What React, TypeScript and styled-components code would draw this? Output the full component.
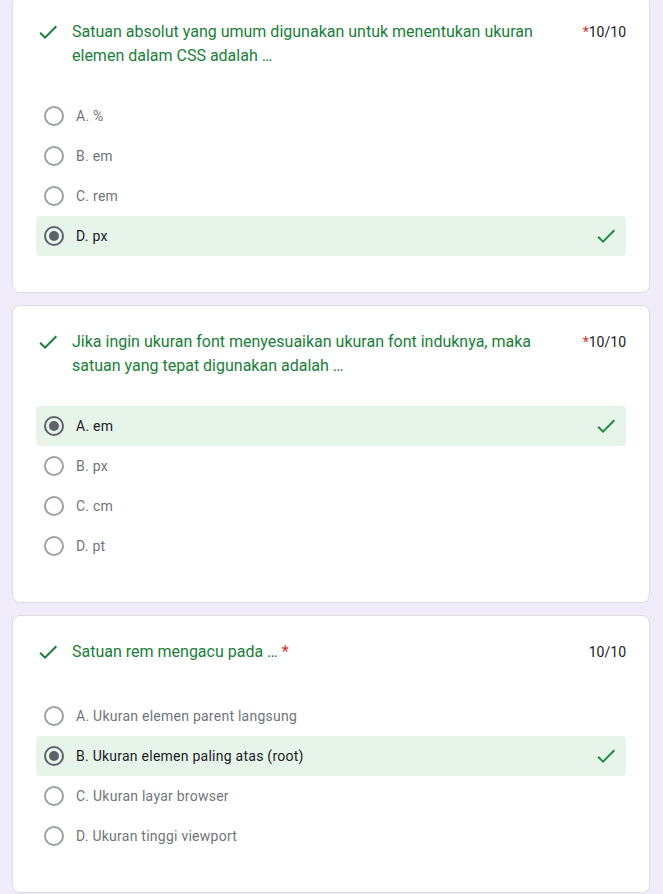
import React from "react";
import styled, { createGlobalStyle } from "styled-components";

const Global = createGlobalStyle`
  html, body { margin: 0; padding: 0; background: #f0ebf8; }
  body { font-family: Roboto, "Liberation Sans", Arial, sans-serif; overflow: hidden; }
`;

const Page = styled.div`
  display: flex;
  flex-direction: column;
  gap: 12px;
  padding: 0 13px 0 12px;
  margin-top: -5px;
`;

const Card = styled.div`
  background: #fff;
  border: 1px solid #dadce0;
  border-radius: 8px;
  padding: 24px 23px 36px;
`;

const Header = styled.div`
  display: flex;
  align-items: flex-start;
  min-height: 28px;
  margin-bottom: 28px;
`;

const HeadIcon = styled.svg`
  width: 24px;
  height: 24px;
  flex: none;
  margin-right: 12px;
  fill: #188038;
`;

const Title = styled.div`
  flex: 1;
  font-size: 16px;
  line-height: 24px;
  color: #188038;
  padding-right: 24px;
`;

const Req = styled.span`
  color: #d93025;
`;

const Score = styled.div`
  flex: none;
  font-size: 14px;
  line-height: 24px;
  color: #202124;
`;

const Options = styled.div`
  display: flex;
  flex-direction: column;
`;

const Row = styled.div<{ $selected: boolean }>`
  display: flex;
  align-items: center;
  height: 40px;
  padding: 0 8px;
  border-radius: 4px;
  background: ${(p) => (p.$selected ? "#e6f4ea" : "transparent")};
`;

const Radio = styled.span<{ $selected: boolean }>`
  width: 20px;
  height: 20px;
  box-sizing: border-box;
  border-radius: 50%;
  border: 2px solid ${(p) => (p.$selected ? "#5f6368" : "#9aa0a6")};
  display: flex;
  align-items: center;
  justify-content: center;
  flex: none;
  margin-right: 12px;
  &::after {
    content: "";
    display: ${(p) => (p.$selected ? "block" : "none")};
    width: 10px;
    height: 10px;
    border-radius: 50%;
    background: #5f6368;
  }
`;

const Label = styled.span<{ $selected: boolean }>`
  flex: 1;
  font-size: 14px;
  line-height: 20px;
  color: ${(p) => (p.$selected ? "#202124" : "#70757a")};
  letter-spacing: 0.25px;
`;

const RowIcon = styled.svg`
  width: 24px;
  height: 24px;
  flex: none;
  fill: #1e8e3e;
`;

const CheckPath = () => (
  <path d="M9 16.17L4.83 12l-1.42 1.41L9 19 21 7l-1.41-1.41z" />
);

type Q = {
  title: string;
  reqInTitle: boolean;
  options: string[];
  answer: number;
};

const questions: Q[] = [
  {
    title:
      "Satuan absolut yang umum digunakan untuk menentukan ukuran elemen dalam CSS adalah …",
    reqInTitle: false,
    options: ["A. %", "B. em", "C. rem", "D. px"],
    answer: 3,
  },
  {
    title:
      "Jika ingin ukuran font menyesuaikan ukuran font induknya, maka satuan yang tepat digunakan adalah …",
    reqInTitle: false,
    options: ["A. em", "B. px", "C. cm", "D. pt"],
    answer: 0,
  },
  {
    title: "Satuan rem mengacu pada …",
    reqInTitle: true,
    options: [
      "A. Ukuran elemen parent langsung",
      "B. Ukuran elemen paling atas (root)",
      "C. Ukuran layar browser",
      "D. Ukuran tinggi viewport",
    ],
    answer: 1,
  },
];

export default function App() {
  return (
    <>
      <Global />
      <Page>
        {questions.map((q, qi) => (
          <Card key={qi}>
            <Header>
              <HeadIcon viewBox="0 0 24 24">
                <CheckPath />
              </HeadIcon>
              <Title>
                {q.title}
                {q.reqInTitle && <Req> *</Req>}
              </Title>
              <Score>
                {!q.reqInTitle && <Req>*</Req>}
                10/10
              </Score>
            </Header>
            <Options>
              {q.options.map((o, oi) => {
                const sel = oi === q.answer;
                return (
                  <Row key={oi} $selected={sel}>
                    <Radio $selected={sel} />
                    <Label $selected={sel}>{o}</Label>
                    {sel && (
                      <RowIcon viewBox="0 0 24 24">
                        <CheckPath />
                      </RowIcon>
                    )}
                  </Row>
                );
              })}
            </Options>
          </Card>
        ))}
      </Page>
    </>
  );
}
